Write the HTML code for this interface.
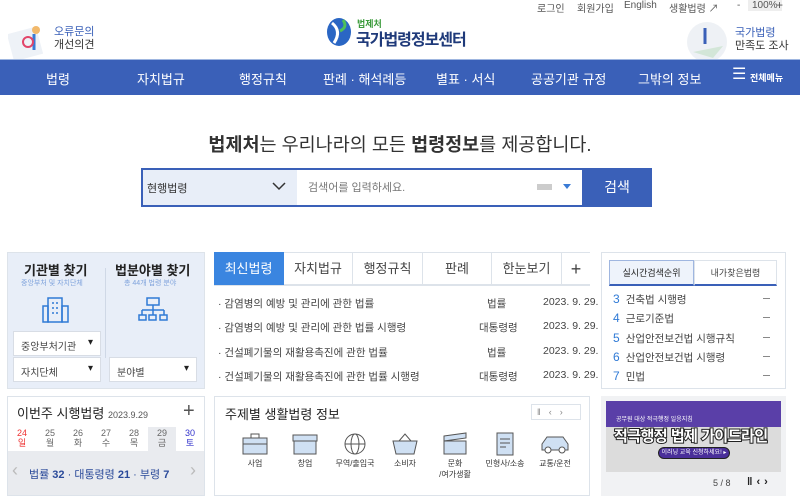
<!DOCTYPE html>
<html><head><meta charset="utf-8"><style>
*{margin:0;padding:0;box-sizing:border-box}
body{width:800px;height:496px;overflow:hidden;background:#fff;font-family:"Liberation Sans","Noto Sans CJK KR",sans-serif;color:#333;position:relative}
.a{position:absolute}
.top{font-size:10px;color:#555;top:0}
.nav{left:0;top:59px;width:800px;height:36px;background:#3a60b8;border-top:1px solid #9fb6e0}
.nav span{position:absolute;top:9px;color:#fff;font-size:13px}
.box{border:1px solid #dde3ea;background:#fff}
.sel{background:#fff;border:1px solid #d8dde5;font-size:10px;color:#444;padding:6px 7px;height:25px}
.sel:after{content:"▾";position:absolute;right:7px;top:5px;font-size:10px;color:#222}
.tab{top:252px;height:33px;border:1px solid #dde3ea;border-left:none;font-size:13px;color:#444;text-align:center;line-height:32px}
.row{left:218px;font-size:10.5px;color:#444}
.rk{left:613px;font-size:10.5px;color:#444}
.rk b{color:#2f7ad6;font-weight:normal;font-size:12px;margin-right:6px}
.dash{left:763px;width:7px;height:1px;background:#888}
</style></head><body>
<div class="a top" style="left:537px">로그인</div>
<div class="a top" style="left:577px">회원가입</div>
<div class="a top" style="left:624px">English</div>
<div class="a top" style="left:669px">생활법령 ↗</div>
<div class="a top" style="left:737px">-</div>
<div class="a top" style="left:748px;background:#eee;padding:0 4px">100%</div>
<div class="a top" style="left:776px;font-size:12px;top:-2px">+</div>

<svg class="a" style="left:8px;top:20px" width="45" height="40"><rect x="2" y="10" width="30" height="28" fill="#eef2f7" transform="rotate(-15 17 24)"/><circle cx="28" cy="10" r="4" fill="#f2b96b"/><path d="M26 14 L26 30" stroke="#3a7bd5" stroke-width="3"/><circle cx="20" cy="22" r="5" fill="none" stroke="#e2456a" stroke-width="2"/></svg>
<div class="a" style="left:54px;top:26px;font-size:11px;line-height:13px;color:#3a60b8">오류문의<br><span style="color:#333">개선의견</span></div>

<svg class="a" style="left:326px;top:17px" width="26" height="30"><ellipse cx="13" cy="15" rx="12" ry="14" fill="#2a66c4"/><path d="M6 6 Q16 14 8 26" stroke="#fff" stroke-width="3" fill="none"/><path d="M17 3 Q22 10 14 14" stroke="#4ec05a" stroke-width="3" fill="none"/></svg>
<div class="a" style="left:357px;top:17px;font-size:9px;color:#3a9a3a;font-weight:bold">법제처</div>
<div class="a" style="left:356px;top:26px;font-size:16px;font-weight:bold;color:#1f3a7a;letter-spacing:-1px">국가법령정보센터</div>

<svg class="a" style="left:683px;top:20px" width="45" height="40"><circle cx="24" cy="22" r="20" fill="#eef1f5"/><path d="M10 32 L40 26 L30 38 Z" fill="#d3e6d8"/><path d="M22 8 L22 24" stroke="#3a60b8" stroke-width="3"/></svg>
<div class="a" style="left:735px;top:27px;font-size:11px;line-height:13px;color:#3a60b8">국가법령<br><span style="color:#333">만족도 조사</span></div>

<div class="a nav">
<span style="left:46px">법령</span><span style="left:137px">자치법규</span><span style="left:239px">행정규칙</span><span style="left:323px">판례 · 해석례등</span><span style="left:436px">별표 · 서식</span><span style="left:531px">공공기관 규정</span><span style="left:638px">그밖의 정보</span>
<span style="left:732px;font-size:16px;top:4px">☰</span><span style="left:750px;font-size:9px;top:11px;font-weight:bold">전체메뉴</span>
</div>

<div class="a" style="left:0;top:131px;width:800px;text-align:center;font-size:18.5px;color:#333"><b>법제처</b>는 우리나라의 모든 <b>법령정보</b>를 제공합니다.</div>
<div class="a" style="left:141px;top:168px;width:511px;height:39px;border:2px solid #3a60b8;background:#fff"></div>
<div class="a" style="left:143px;top:170px;width:154px;height:35px;background:#e8eef8;font-size:11px;padding:10px 4px">현행법령</div>
<svg class="a" style="left:272px;top:182px" width="14" height="9"><path d="M1 1 L7 7 L13 1" stroke="#333" stroke-width="1.5" fill="none"/></svg>
<div class="a" style="left:308px;top:179px;font-size:11px;color:#777">검색어를 입력하세요.</div>
<div class="a" style="left:537px;top:184px;width:15px;height:6px;background:#ccc"></div>
<div class="a" style="left:563px;top:184px;border:4px solid transparent;border-top:5px solid #3a7bd5"></div>
<div class="a" style="left:582px;top:168px;width:70px;height:39px;background:#3a60b8;color:#fff;font-size:14px;text-align:center;line-height:38px">검색</div>

<div class="a" style="left:7px;top:252px;width:198px;height:137px;background:#e8eef8;border:1px solid #dde3ea"></div>
<div class="a" style="left:105px;top:268px;width:1px;height:90px;background:#cfd8e6"></div>
<div class="a" style="left:24px;top:260px;font-size:13px;font-weight:bold;color:#222">기관별 찾기</div>
<div class="a" style="left:21px;top:278px;font-size:7px;color:#7fa3dc">중앙부처 및 자치단체</div>
<div class="a" style="left:115px;top:260px;font-size:13px;font-weight:bold;color:#222">법분야별 찾기</div>
<div class="a" style="left:124px;top:278px;font-size:7px;color:#7fa3dc">총 44개 법령 분야</div>
<svg class="a" style="left:42px;top:296px" width="30" height="28" fill="none" stroke="#2f7ad6" stroke-width="1.5"><rect x="6" y="2" width="14" height="24"/><rect x="1" y="10" width="5" height="16"/><rect x="20" y="10" width="6" height="16"/><path d="M10 7h2M14 7h2M10 12h2M14 12h2M10 17h2M14 17h2"/></svg>
<svg class="a" style="left:138px;top:297px" width="30" height="26" fill="none" stroke="#2f7ad6" stroke-width="1.5"><rect x="9" y="1" width="12" height="7"/><path d="M15 8v5M4 13h22M4 13v5M15 13v5M26 13v5"/><rect x="1" y="18" width="7" height="5"/><rect x="11" y="18" width="7" height="5"/><rect x="22" y="18" width="7" height="5"/></svg>
<div class="a sel" style="left:13px;top:331px;width:88px">중앙부처기관</div>
<div class="a sel" style="left:13px;top:357px;width:88px">자치단체</div>
<div class="a sel" style="left:109px;top:357px;width:88px">분야별</div>

<div class="a box" style="left:7px;top:396px;width:198px;height:100px"></div>
<div class="a" style="left:17px;top:403px;font-size:13px;color:#222">이번주 시행법령 <span style="font-size:9px;color:#555">2023.9.29</span></div>
<div class="a" style="left:183px;top:400px;font-size:20px;color:#555">+</div>
<div class="a" style="left:8px;top:451px;width:196px;height:44px;background:#e9ebef"></div>
<div class="a" style="left:148px;top:427px;width:28px;height:25px;background:#e9ebef"></div>
<div class="a" style="left:8px;top:428px;width:196px;font-size:9px;line-height:10px;display:flex;text-align:center;color:#666">
<div style="width:28px;color:#e33">24<br>일</div><div style="width:28px">25<br>월</div><div style="width:28px">26<br>화</div><div style="width:28px">27<br>수</div><div style="width:28px">28<br>목</div><div style="width:28px">29<br>금</div><div style="width:28px;color:#33c">30<br>토</div></div>
<div class="a" style="left:12px;top:460px;font-size:18px;color:#bbb">‹</div>
<div class="a" style="left:190px;top:460px;font-size:18px;color:#bbb">›</div>
<div class="a" style="left:29px;top:466px;font-size:11px;color:#2a4a9a">법률 <b>32</b> · 대통령령 <b>21</b> · 부령 <b>7</b></div>

<div class="a tab" style="left:214px;width:70px;background:#3a85e0;color:#fff;border-color:#3a85e0">최신법령</div>
<div class="a tab" style="left:284px;width:69px">자치법규</div>
<div class="a tab" style="left:353px;width:70px">행정규칙</div>
<div class="a tab" style="left:423px;width:69px">판례</div>
<div class="a tab" style="left:492px;width:70px">한눈보기</div>
<div class="a tab" style="left:562px;width:28px;border-right:none;font-size:18px">+</div>
<div class="a" style="left:214px;top:285px;width:376px;height:1px;background:#dde3ea"></div>
<div class="a row" style="top:296px">· 감염병의 예방 및 관리에 관한 법률</div>
<div class="a row" style="top:320px">· 감염병의 예방 및 관리에 관한 법률 시행령</div>
<div class="a row" style="top:345px">· 건설폐기물의 재활용촉진에 관한 법률</div>
<div class="a row" style="top:369px">· 건설폐기물의 재활용촉진에 관한 법률 시행령</div>
<div class="a row" style="left:487px;top:296px">법률</div><div class="a row" style="left:543px;top:296px">2023. 9. 29.</div>
<div class="a row" style="left:479px;top:320px">대통령령</div><div class="a row" style="left:543px;top:320px">2023. 9. 29.</div>
<div class="a row" style="left:487px;top:345px">법률</div><div class="a row" style="left:543px;top:345px">2023. 9. 29.</div>
<div class="a row" style="left:479px;top:369px">대통령령</div><div class="a row" style="left:543px;top:369px">2023. 9. 29.</div>

<div class="a box" style="left:214px;top:396px;width:376px;height:100px"></div>
<div class="a" style="left:225px;top:404px;font-size:13px;color:#222">주제별 생활법령 정보</div>
<div class="a" style="left:531px;top:404px;width:50px;height:16px;border:1px solid #dde3ea;font-size:9px;color:#888;line-height:14px;letter-spacing:8px;padding-left:5px">‖‹›</div>
<div class="a" style="left:230px;top:432px;width:355px;display:flex;font-size:8px;text-align:center;color:#333">
<div style="width:50px">
<svg width="28" height="24" fill="#cfe0f3" stroke="#555"><rect x="2" y="6" width="24" height="16"/><path d="M10 6V2h8v4M2 12h24" fill="none"/></svg><br>사업</div>
<div style="width:50px"><svg width="28" height="24" fill="#cfe0f3" stroke="#555"><rect x="3" y="8" width="22" height="14"/><path d="M2 3h24v6H2z"/></svg><br>창업</div>
<div style="width:50px"><svg width="28" height="24" fill="none" stroke="#555"><circle cx="14" cy="12" r="10"/><ellipse cx="14" cy="12" rx="4" ry="10"/><path d="M4 12h20"/></svg><br>무역/출입국</div>
<div style="width:50px"><svg width="28" height="24" fill="#cfe0f3" stroke="#555"><path d="M2 9h24l-3 13H5z"/><path d="M8 9l6-7 6 7" fill="none"/></svg><br>소비자</div>
<div style="width:50px"><svg width="28" height="24" fill="#cfe0f3" stroke="#555"><rect x="3" y="9" width="22" height="13"/><path d="M3 4l22-3v5L3 9z"/></svg><br>문화<br>/여가생활</div>
<div style="width:50px"><svg width="28" height="24" fill="#cfe0f3" stroke="#555"><rect x="6" y="1" width="16" height="22"/><path d="M9 7h10M9 11h10M9 15h6" /></svg><br>민형사/소송</div>
<div style="width:50px"><svg width="30" height="24" fill="#cfe0f3" stroke="#555"><path d="M2 18v-6l5-7h16l5 7v6z"/><circle cx="8" cy="18" r="3" fill="#fff"/><circle cx="22" cy="18" r="3" fill="#fff"/></svg><br>교통/운전</div>
</div>

<div class="a box" style="left:601px;top:252px;width:185px;height:137px"></div>
<div class="a" style="left:609px;top:260px;width:85px;height:26px;border:1px solid #9fb6e0;border-bottom:2px solid #3a60b8;background:#eef3fb;font-size:9px;text-align:center;line-height:24px;color:#222">실시간검색순위</div>
<div class="a" style="left:694px;top:260px;width:83px;height:26px;border:1px solid #dde3ea;border-bottom:2px solid #3a60b8;font-size:9px;text-align:center;line-height:24px;color:#444">내가찾은법령</div>
<div class="a rk" style="top:292px"><b>3</b>건축법 시행령</div>
<div class="a rk" style="top:311px"><b>4</b>근로기준법</div>
<div class="a rk" style="top:331px"><b>5</b>산업안전보건법 시행규칙</div>
<div class="a rk" style="top:350px"><b>6</b>산업안전보건법 시행령</div>
<div class="a rk" style="top:369px"><b>7</b>민법</div>
<div class="a dash" style="top:298px"></div><div class="a dash" style="top:317px"></div><div class="a dash" style="top:337px"></div><div class="a dash" style="top:356px"></div><div class="a dash" style="top:375px"></div>

<div class="a" style="left:601px;top:396px;width:185px;height:100px;background:#f1f2f4"></div>
<div class="a" style="left:606px;top:401px;width:175px;height:71px;background:#dcdcdc;overflow:hidden">
<div class="a" style="left:0;top:0;width:175px;height:26px;background:#5a3fa8"></div>
<div class="a" style="left:10px;top:13px;font-size:6px;color:#fff">공무원 대상 적극행정 일응지침</div>
<div class="a" style="left:8px;top:24px;font-size:15px;font-weight:bold;color:#fff;-webkit-text-stroke:2px #222;paint-order:stroke;letter-spacing:-0.5px">적극행정 법제 가이드라인</div>
<div class="a" style="left:52px;top:46px;width:72px;height:12px;border-radius:6px;background:#4a2f9a;border:1px solid #222;color:#fff;font-size:6px;text-align:center;line-height:10px">이러닝 교육 신청하세요! ▸</div>
</div>
<div class="a" style="left:713px;top:478px;font-size:9px;color:#444">5 / 8</div>
<div class="a" style="left:747px;top:476px;font-size:11px;color:#222;font-weight:bold;letter-spacing:4px">‖‹›</div>
</body></html>
